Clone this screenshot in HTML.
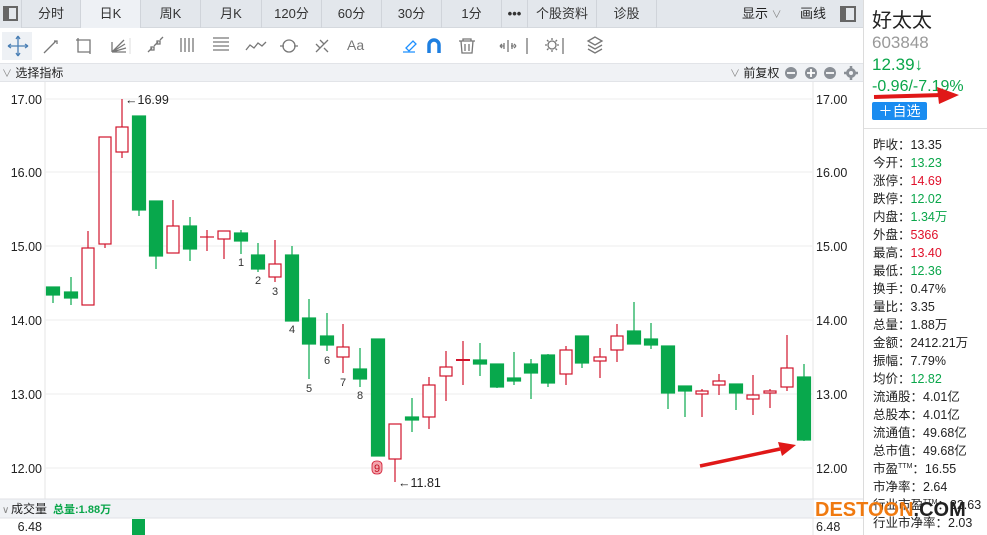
<!DOCTYPE html>
<html><head><meta charset="utf-8">
<style>
*{margin:0;padding:0;box-sizing:border-box}
body{width:987px;height:535px;overflow:hidden;background:#fff;font-family:"Liberation Sans","Noto Sans CJK SC",sans-serif;color:#222;position:relative}
.tabs{position:absolute;left:0;top:0;width:863px;height:28px;background:#e3e7ec;border-bottom:1px solid #d5d9de;font-size:13px}
.tab{position:absolute;top:0;height:28px;line-height:28px;text-align:center;border-right:1px solid #d0d4da;color:#333}
.tool{position:absolute;left:0;top:28px;width:863px;height:35px;background:#fff}
.ind{position:absolute;left:0;top:63px;width:863px;height:19px;background:#f0f2f5;border-top:1px solid #e2e4e8;border-bottom:1px solid #e2e4e8;font-size:12px;line-height:18px}
.right{position:absolute;left:863px;top:0;width:124px;height:535px;border-left:1px solid #dcdcdc;background:#fff}
.row{position:absolute;left:9px;font-size:12.5px;color:#222;white-space:nowrap}
.g{color:#0aa64a}.r{color:#e0112b}
</style></head><body>
<div class="tabs">
<div class="tab" style="left:0;width:22px;background:#e3e7ec"><div style="position:absolute;left:3px;top:6px;width:15px;height:15px;border:2px solid #666;"><div style="width:4px;height:11px;background:#666"></div></div></div>
<div class="tab" style="left:22px;width:59px">分时</div>
<div class="tab" style="left:81px;width:60px;background:#eef1f5">日K</div>
<div class="tab" style="left:141px;width:60px">周K</div>
<div class="tab" style="left:201px;width:61px">月K</div>
<div class="tab" style="left:262px;width:60px">120分</div>
<div class="tab" style="left:322px;width:60px">60分</div>
<div class="tab" style="left:382px;width:60px">30分</div>
<div class="tab" style="left:442px;width:60px">1分</div>
<div class="tab" style="left:502px;width:26px;font-weight:bold">•••</div>
<div class="tab" style="left:528px;width:69px">个股资料</div>
<div class="tab" style="left:597px;width:60px">诊股</div>
<div style="position:absolute;left:742px;top:0;line-height:28px">显示 <span style="color:#888;font-size:10px">∨</span></div>
<div style="position:absolute;left:800px;top:0;line-height:28px">画线</div>
<div style="position:absolute;left:840px;top:6px;width:16px;height:16px;border:2px solid #666"><div style="width:4px;height:12px;background:#666"></div></div>
</div>
<div class="tool">
<svg width="863" height="35" style="position:absolute;left:0;top:0" fill="none" stroke="#777" stroke-width="1.3">
<rect x="2" y="4" width="30" height="28" fill="#eef1f5" stroke="none"/>
<path d="M8 18h20M18 8v20M8 18l3-2M8 18l3 2M28 18l-3-2M28 18l-3 2M18 8l-2 3M18 8l2 3M18 28l-2-3M18 28l2-3" stroke="#4a7fb5"/>
<path d="M44 25l12-12M54 13h3v3"/>
<path d="M78 12h12v12H78zM76 12h4M86 24h4M78 10v4M90 22v4"/>
<path d="M112 24l12-12M112 24l13-8M112 24l14-4M112 24h14M112 14v10"/>
<path d="M148 24l4-4M154 18l4-4M160 12l3-3" /><rect x="151" y="19" width="3" height="3"/><rect x="157" y="13" width="3" height="3"/>
<path d="M181 10v14M185 10v14M189 10v14M193 10v14"/>
<path d="M213 10h16M213 14h16M213 18h16M213 22h16"/>
<path d="M246 22l4-5 4 3 4-5 4 3 4-4"/>
<circle cx="289" cy="18" r="6"/><path d="M280 18h4M294 18h4"/>
<path d="M316 24l12-12M316 16l4 4M320 12l4 4M324 20l4 4"/>
<path d="M415 24h-12M406 20l7-7 3 3-7 7z" stroke="#1e90ff"/>
<path d="M429 25v-8a5 5 0 0 1 10 0v8" stroke="#1e7fe0" stroke-width="3.5"/>
<path d="M459 13h16M463 13v-2h8v2M461 13l1 12h10l1-12M465 16v7M469 16v7"/>
<path d="M508 12v12M501 18h3M511 18h3M500 18l2-2M500 18l2 2M516 18l-2-2M516 18l-2 2M504 15v6M512 15v6"/>
<path d="M527 10v16M563 10v16"/>
<circle cx="552" cy="17" r="4"/><path d="M552 10v2M552 22v2M545 17h2M557 17h2M547 12l1.5 1.5M557 12l-1.5 1.5M547 22l1.5-1.5M557 22l-1.5-1.5"/>
<path d="M595 9l-7 4 7 4 7-4zM588 17l7 4 7-4M588 21l7 4 7-4"/>
<path d="M130 10v16" stroke="#e4e4e4"/>
</svg>
<span style="position:absolute;left:347px;top:9px;font-size:14px;color:#777">Aa</span>
</div>
<div class="ind"><span style="color:#888;font-size:10px;margin-left:2px">∨</span> 选择指标
<span style="position:absolute;left:730px;top:0"><span style="color:#888;font-size:10px">∨</span> 前复权</span>
<svg width="80" height="18" style="position:absolute;left:782px;top:0"><g fill="#8a8f96"><circle cx="9" cy="9" r="6"/><circle cx="29" cy="9" r="6"/><circle cx="48" cy="9" r="6"/><circle cx="69" cy="9" r="5"/></g><g stroke="#fff" stroke-width="1.8"><path d="M5 9h8M25 9h8M29 5v8M44 9h8"/></g><circle cx="69" cy="9" r="2" fill="#f0f2f5"/><path d="M69 2v3M69 13v3M62 9h3M73 9h3" stroke="#8a8f96" stroke-width="2.5"/></svg>
</div>

<svg width="863" height="453" style="position:absolute;left:0;top:82px" font-family="Liberation Sans" font-size="12.5">
<g transform="translate(0,-82)">
<line x1="45" y1="82" x2="45" y2="500" stroke="#e6e6e6"/>
<line x1="813" y1="82" x2="813" y2="535" stroke="#e6e6e6"/>
<g stroke="#eeeeee"><path d="M45 99H813M45 172H813M45 246H813M45 320H813M45 394H813M45 468H813"/></g>
<g fill="#222" text-anchor="end"><text x="42" y="104">17.00</text><text x="42" y="177">16.00</text><text x="42" y="251">15.00</text><text x="42" y="325">14.00</text><text x="42" y="399">13.00</text><text x="42" y="473">12.00</text><text x="42" y="531">6.48</text></g>
<g fill="#222"><text x="816" y="104">17.00</text><text x="816" y="177">16.00</text><text x="816" y="251">15.00</text><text x="816" y="325">14.00</text><text x="816" y="399">13.00</text><text x="816" y="473">12.00</text><text x="816" y="531">6.48</text></g>
<rect x="0" y="499" width="813" height="19" fill="#f0f2f5"/>
<line x1="0" y1="499" x2="863" y2="499" stroke="#e0e2e6"/>
<line x1="0" y1="518" x2="863" y2="518" stroke="#e0e2e6"/>
<text x="2" y="513" fill="#888" font-size="10">∨</text>
<text x="11" y="513" fill="#222" font-size="12" font-family="Liberation Sans, Noto Sans CJK SC">成交量</text>
<text x="53" y="513" fill="#0aa64a" font-size="11" font-weight="bold" font-family="Liberation Sans, Noto Sans CJK SC">总量:1.88万</text>
<rect x="132" y="519" width="13" height="16" fill="#08a84c"/>
<g stroke-width="1.2">
<g stroke="#08a84c" fill="#08a84c">
<line x1="53" y1="287" x2="53" y2="303"/><rect x="46.5" y="287" width="13" height="8"/>
<line x1="71" y1="277" x2="71" y2="305"/><rect x="64.5" y="292" width="13" height="6"/>
<line x1="139" y1="116" x2="139" y2="216"/><rect x="132.5" y="116" width="13" height="94"/>
<line x1="156" y1="201" x2="156" y2="269"/><rect x="149.5" y="201" width="13" height="55"/>
<line x1="190" y1="217" x2="190" y2="261"/><rect x="183.5" y="226" width="13" height="23"/>
<line x1="241" y1="230" x2="241" y2="254"/><rect x="234.5" y="233" width="13" height="8"/>
<line x1="258" y1="243" x2="258" y2="272"/><rect x="251.5" y="255" width="13" height="14"/>
<line x1="292" y1="246" x2="292" y2="321"/><rect x="285.5" y="255" width="13" height="66"/>
<line x1="309" y1="299" x2="309" y2="379"/><rect x="302.5" y="318" width="13" height="26"/>
<line x1="327" y1="313" x2="327" y2="351"/><rect x="320.5" y="336" width="13" height="9"/>
<line x1="360" y1="348" x2="360" y2="387"/><rect x="353.5" y="369" width="13" height="10"/>
<rect x="371.5" y="339" width="13" height="117"/>
<line x1="412" y1="398" x2="412" y2="432"/><rect x="405.5" y="417" width="13" height="3"/>
<line x1="480" y1="343" x2="480" y2="376"/><rect x="473.5" y="360" width="13" height="4"/>
<line x1="497" y1="364" x2="497" y2="388"/><rect x="490.5" y="364" width="13" height="23"/>
<line x1="514" y1="352" x2="514" y2="385"/><rect x="507.5" y="378" width="13" height="3"/>
<line x1="531" y1="359" x2="531" y2="399"/><rect x="524.5" y="364" width="13" height="9"/>
<line x1="548" y1="354" x2="548" y2="387"/><rect x="541.5" y="355" width="13" height="28"/>
<line x1="582" y1="336" x2="582" y2="368"/><rect x="575.5" y="336" width="13" height="27"/>
<line x1="634" y1="302" x2="634" y2="344"/><rect x="627.5" y="331" width="13" height="13"/>
<line x1="651" y1="323" x2="651" y2="349"/><rect x="644.5" y="339" width="13" height="6"/>
<line x1="668" y1="346" x2="668" y2="409"/><rect x="661.5" y="346" width="13" height="47"/>
<line x1="685" y1="386" x2="685" y2="417"/><rect x="678.5" y="386" width="13" height="5"/>
<line x1="736" y1="384" x2="736" y2="410"/><rect x="729.5" y="384" width="13" height="9"/>
<line x1="804" y1="364" x2="804" y2="441"/><rect x="797.5" y="377" width="13" height="63"/>
</g>
<g stroke="#d0142c" fill="#fff">
<line x1="88" y1="231" x2="88" y2="305"/><rect x="82" y="248" width="12" height="57"/>
<line x1="105" y1="137" x2="105" y2="248"/><rect x="99" y="137" width="12" height="107"/>
<line x1="122" y1="99" x2="122" y2="158"/><rect x="116" y="127" width="12" height="25"/>
<line x1="173" y1="200" x2="173" y2="253"/><rect x="167" y="226" width="12" height="27"/>
<line x1="207" y1="230" x2="207" y2="251"/><line x1="200" y1="237" x2="214" y2="237"/>
<line x1="224" y1="231" x2="224" y2="259"/><rect x="218" y="231" width="12" height="8"/>
<line x1="275" y1="240" x2="275" y2="282"/><rect x="269" y="264" width="12" height="13"/>
<line x1="343" y1="324" x2="343" y2="373"/><rect x="337" y="347" width="12" height="10"/>
<line x1="395" y1="424" x2="395" y2="482"/><rect x="389" y="424" width="12" height="35"/>
<line x1="429" y1="377" x2="429" y2="429"/><rect x="423" y="385" width="12" height="32"/>
<line x1="446" y1="351" x2="446" y2="401"/><rect x="440" y="367" width="12" height="9"/>
<line x1="463" y1="341" x2="463" y2="385"/><line x1="456" y1="360" x2="470" y2="360" stroke-width="2"/>
<line x1="566" y1="346" x2="566" y2="385"/><rect x="560" y="350" width="12" height="24"/>
<line x1="600" y1="348" x2="600" y2="378"/><rect x="594" y="357" width="12" height="4"/>
<line x1="617" y1="324" x2="617" y2="362"/><rect x="611" y="336" width="12" height="14"/>
<line x1="702" y1="389" x2="702" y2="417"/><rect x="696" y="391" width="12" height="3"/>
<line x1="719" y1="374" x2="719" y2="395"/><rect x="713" y="381" width="12" height="4"/>
<line x1="753" y1="375" x2="753" y2="415"/><rect x="747" y="395" width="12" height="4"/>
<line x1="770" y1="389" x2="770" y2="408"/><rect x="764" y="391" width="12" height="2"/>
<line x1="787" y1="335" x2="787" y2="391"/><rect x="781" y="368" width="12" height="19"/>
</g>
</g>
<g fill="#333" font-size="11" text-anchor="middle"><text x="241" y="266">1</text><text x="258" y="284">2</text><text x="275" y="295">3</text><text x="292" y="333">4</text><text x="309" y="392">5</text><text x="327" y="364">6</text><text x="343" y="386">7</text><text x="360" y="399">8</text></g>
<rect x="372" y="461" width="10" height="13" rx="4" fill="#f3a5ad" stroke="#d0142c" stroke-width="0.8"/><text x="377" y="472" fill="#c01020" font-size="11" text-anchor="middle">9</text>
<text x="125" y="104" fill="#222">←16.99</text>
<text x="398" y="487" fill="#222">←11.81</text>
<path d="M700 466L780 449" stroke="#e01818" stroke-width="3.5"/><path d="M796 445L778 442L782 456Z" fill="#e01818"/>
</g>
</svg>

<div class="right">
<div style="position:absolute;left:8px;top:4px;font-size:20px;color:#222">好太太</div>
<div style="position:absolute;left:8px;top:33px;font-size:17px;color:#999">603848</div>
<div style="position:absolute;left:8px;top:55px;font-size:17px" class="g">12.39↓</div>
<div style="position:absolute;left:8px;top:78px;font-size:16px" class="g">-0.96/-7.19%</div>
<svg width="124" height="30" style="position:absolute;left:0;top:83px"><path d="M10 14L78 12" stroke="#e01818" stroke-width="4"/><path d="M95 12L73 4L75 21Z" fill="#e01818"/></svg>
<div style="position:absolute;left:8px;top:102px;width:55px;height:18px;background:#1a8cf0;border-radius:2px;color:#fff;font-size:14px;line-height:18px;text-align:center">＋自选</div>
<div style="position:absolute;left:0;top:128px;width:124px;border-top:1px solid #e0e0e0"></div>
<div class="row" style="top:134px">昨收：13.35</div>
<div class="row" style="top:152px">今开：<span class="g">13.23</span></div>
<div class="row" style="top:170px">涨停：<span class="r">14.69</span></div>
<div class="row" style="top:188px">跌停：<span class="g">12.02</span></div>
<div class="row" style="top:206px">内盘：<span class="g">1.34万</span></div>
<div class="row" style="top:224px">外盘：<span class="r">5366</span></div>
<div class="row" style="top:242px">最高：<span class="r">13.40</span></div>
<div class="row" style="top:260px">最低：<span class="g">12.36</span></div>
<div class="row" style="top:278px">换手：0.47%</div>
<div class="row" style="top:296px">量比：3.35</div>
<div class="row" style="top:314px">总量：1.88万</div>
<div class="row" style="top:332px">金额：2412.21万</div>
<div class="row" style="top:350px">振幅：7.79%</div>
<div class="row" style="top:368px">均价：<span class="g">12.82</span></div>
<div class="row" style="top:386px">流通股：4.01亿</div>
<div class="row" style="top:404px">总股本：4.01亿</div>
<div class="row" style="top:422px">流通值：49.68亿</div>
<div class="row" style="top:440px">总市值：49.68亿</div>
<div class="row" style="top:458px">市盈<sup style="font-size:7px">TTM</sup>：16.55</div>
<div class="row" style="top:476px">市净率：2.64</div>
<div class="row" style="top:494px">行业市盈<sup style="font-size:7px">TTM</sup>：22.63</div>
<div class="row" style="top:512px">行业市净率：2.03</div>
</div>
<div style="position:absolute;left:815px;top:499px;font-size:20px;font-weight:bold;font-family:'Liberation Sans',sans-serif;white-space:nowrap"><span style="color:#f07a10">DESTOON</span><span style="color:#222">.COM</span></div>
</body></html>
